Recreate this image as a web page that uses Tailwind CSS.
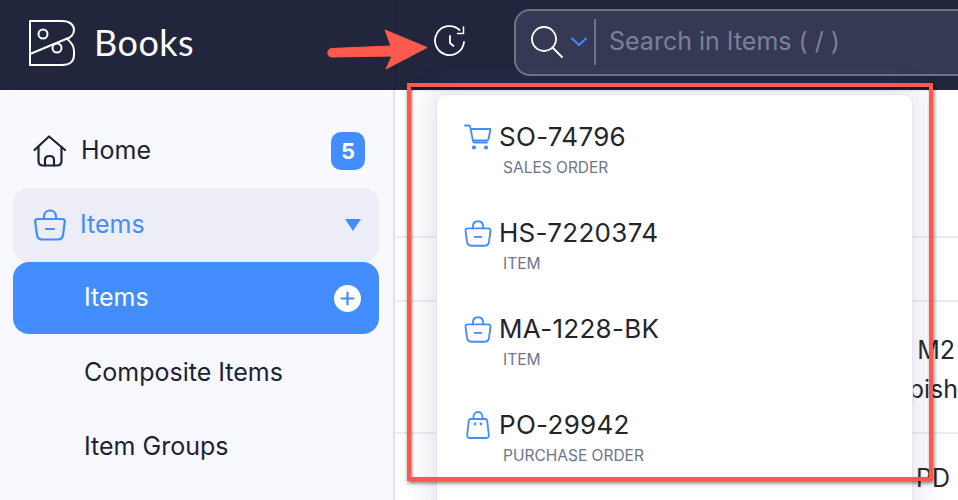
<!doctype html>
<html><head><meta charset="utf-8"><script src="https://cdn.jsdelivr.net/npm/@tailwindcss/browser@4"></script></head>
<body class="m-0 bg-white">
<div class="relative w-[958px] h-[500px] overflow-hidden bg-white font-['Inter',sans-serif]">
  <header class="flex h-[90px] bg-[#22263d]">
    <div class="flex items-center w-[395px] h-[90px] bg-[#22263d] rounded-bl-[14px] rounded-br-[14px] pl-[28px] pb-[6px] gap-[18px]">
      <svg class="w-[48px] h-[48px]" viewBox="0 0 48 48" fill="none" stroke="#fff" stroke-width="2"><path d="M2 3H34C42 3 46 7 46 12C46 16 43 20 38 21L2 36V3Z" stroke-linejoin="round"/><path d="M2 36V48H34C42 48 46 44 46 38V34C46 28 42 24 38 21" transform="translate(0 -1)"/><circle cx="15" cy="16" r="4.5"/><circle cx="29" cy="30" r="4.5"/></svg>
      <span class="text-[36px] leading-none text-white font-['Lato',sans-serif] tracking-[0.5px]">Books</span>
    </div>
    <div class="flex items-center flex-1 border-l border-[#191c2e] pl-[38px] ml-[0px] pb-[6px] gap-[46px]">
      <svg class="w-[34px] h-[34px]" viewBox="0 0 34 34" fill="none" stroke="#fff" stroke-width="1.8" stroke-linecap="round"><path d="M30 17A14.5 14.5 0 1 1 25.500 5"/><path d="M29.500 2V8.500H23.500" stroke-linejoin="round" stroke-width="1.500"/><path d="M16 11V18L19.500 21"/></svg>
      <div class="flex items-center w-[460px] h-[67px] mr-[-16px] rounded-[16px] border-2 border-[#6e7288] bg-[#353954]">
        <svg class="ml-[14px] w-[34px] h-[34px]" viewBox="0 0 34 34" fill="none" stroke="#fff" stroke-width="1.800" stroke-linecap="round"><circle cx="14" cy="14" r="12"/><path d="M23 23L32 32"/></svg>
        <svg class="ml-[7px] w-[16px] h-[10px]" viewBox="0 0 16 10" fill="none" stroke="#3f8dff" stroke-width="2" stroke-linecap="round" stroke-linejoin="round"><path d="M1 1.500L8 8L15 1.500"/></svg>
        <div class="ml-[7px] w-[2px] h-[46px] bg-[#6e7288]"></div>
        <span class="ml-[13px] text-[25px] text-[#7d8097] whitespace-nowrap">Search in Items ( / )</span>
      </div>
    </div>
  </header>
  <div class="flex h-[410px]">
    <aside class="w-[395px] h-full bg-[#f8f9ff] border-r-2 border-[#e3e3e6] pl-[13px] pr-[14px] pt-[24px] text-[#1e2235] text-[25px] shrink-0">
      <div class="flex items-center h-[74px] pl-[20px] pr-[14px] pb-[0px]">
        <svg class="w-[34px] h-[32px] mr-[14px]" viewBox="0 0 34 32" fill="none" stroke="#1e2235" stroke-width="2.200" stroke-linecap="round" stroke-linejoin="round"><path d="M1.500 15L16 1.500L32 15"/><path d="M5.500 12V26C5.500 29 7 30.500 10 30.500H24C27 30.500 28.500 29 28.500 26V12"/><path d="M12 30.500V25C12 22.500 14 21 16.500 21C19 21 21 22.500 21 25V30.500"/></svg>
        <span class="flex-1">Home</span>
        <span class="flex items-center justify-center w-[34px] h-[38px] rounded-[10px] bg-[#438dff] text-white text-[22px] font-bold">5</span>
      </div>
      <div class="flex items-center h-[74px] pl-[21px] pr-[18px] rounded-[16px] bg-[#ecedf6] text-[#438dff]">
        <svg class="w-[32px] h-[32px] mr-[14px]" viewBox="0 0 32 32" fill="none" stroke="#438dff" stroke-width="2.200" stroke-linecap="round" stroke-linejoin="round"><path d="M10 10V8C10 4 12.500 1.500 16 1.500C19.500 1.500 22 4 22 8V10"/><path d="M3.500 10H28.500C30 10 31 11 30.800 13L29 26C28.500 29 27 30.500 24 30.500H8C5 30.500 3.500 29 3 26L1.200 13C1 11 2 10 3.500 10Z"/><path d="M12 20H20"/></svg>
        <span class="flex-1">Items</span>
        <span class="w-0 h-0 border-l-[8px] border-r-[8px] border-t-[12px] border-l-transparent border-r-transparent border-t-[#438dff] mb-[1px]"></span>
      </div>
      <div class="flex items-center h-[72px] mt-0 pl-[71px] pr-[18px] rounded-[16px] bg-[#438dff] text-white">
        <span class="flex-1">Items</span>
        <span class="flex items-center justify-center w-[27px] h-[27px] rounded-full bg-white"><svg class="w-[15px] h-[15px]" viewBox="0 0 15 15" stroke="#438dff" stroke-width="2.200" stroke-linecap="round"><path d="M7.500 1.500V13.500M1.500 7.500H13.500"/></svg></span>
      </div>
      <div class="flex items-center h-[74px] pl-[71px] mt-[2px]">Composite Items</div>
      <div class="flex items-center h-[74px] pl-[71px]">Item Groups</div>
    </aside>
    <main class="flex-1 text-[#26282f] text-[25px] relative">
      <div class="h-[148px] border-b-2 border-[#ecedf4]"></div>
      <div class="h-[64px] border-b-2 border-[#ecedf4]"></div>
      <div class="h-[132px] border-b-2 border-[#ecedf4] flex flex-col items-end pt-[29px] leading-[39px] whitespace-nowrap"><span class="pr-[3px]">M2</span><span>pish</span></div>
      <div class="flex justify-end pt-[26px] pr-[8px]">PD</div>
    </main>
  </div>

  <div class="absolute left-[436px] top-[94px] w-[477px] h-[430px] rounded-[10px] bg-white border border-[#e6e6f0] shadow-[0_0_24px_8px_rgba(90,90,150,0.14)] pt-[23px] pl-[27px] text-[#22252c]">
    <div class="h-[96px]">
      <div class="flex items-center h-[38px]">
        <svg class="w-[28px] h-[26px] mr-[7px]" viewBox="0 0 28 26" fill="none" stroke="#438dff" stroke-width="1.800" stroke-linecap="round" stroke-linejoin="round"><path d="M1 1.500H4.500C5.500 1.500 6 2 6.200 3L9 17C9.200 18 10 18.500 11 18.500H23"/><path d="M7 5H26.500L24.500 15C24.300 16 23.500 16.500 22.500 16.500H9"/><circle cx="10" cy="23.500" r="1.200" fill="#438dff"/><circle cx="22" cy="23.500" r="1.200" fill="#438dff"/></svg>
        <span class="text-[26px] tracking-[0.3px] leading-none">SO-74796</span>
      </div>
      <div class="pl-[39px] text-[15.500px] leading-[20px] text-[#6f7489] mt-[2px]">SALES ORDER</div>
    </div>
    <div class="h-[96px]">
      <div class="flex items-center h-[38px]">
        <svg class="w-[28px] h-[27px] mr-[7px]" viewBox="0 0 32 32" fill="none" stroke="#438dff" stroke-width="2.200" stroke-linecap="round" stroke-linejoin="round"><path d="M10 10V8C10 4 12.500 1.500 16 1.500C19.500 1.500 22 4 22 8V10"/><path d="M3.500 10H28.500C30 10 31 11 30.800 13L29 26C28.500 29 27 30.500 24 30.500H8C5 30.500 3.500 29 3 26L1.200 13C1 11 2 10 3.500 10Z"/><path d="M12 20H20"/></svg>
        <span class="text-[26px] tracking-[0.3px] leading-none">HS-7220374</span>
      </div>
      <div class="pl-[39px] text-[15.500px] leading-[20px] text-[#6f7489] mt-[2px]">ITEM</div>
    </div>
    <div class="h-[96px]">
      <div class="flex items-center h-[38px]">
        <svg class="w-[28px] h-[27px] mr-[7px]" viewBox="0 0 32 32" fill="none" stroke="#438dff" stroke-width="2.200" stroke-linecap="round" stroke-linejoin="round"><path d="M10 10V8C10 4 12.500 1.500 16 1.500C19.500 1.500 22 4 22 8V10"/><path d="M3.500 10H28.500C30 10 31 11 30.800 13L29 26C28.500 29 27 30.500 24 30.500H8C5 30.500 3.500 29 3 26L1.200 13C1 11 2 10 3.500 10Z"/><path d="M12 20H20"/></svg>
        <span class="text-[26px] tracking-[0.3px] leading-none">MA-1228-BK</span>
      </div>
      <div class="pl-[39px] text-[15.500px] leading-[20px] text-[#6f7489] mt-[2px]">ITEM</div>
    </div>
    <div class="h-[96px]">
      <div class="flex items-center h-[38px]">
        <svg class="w-[24px] h-[28px] ml-[2px] mr-[9px]" viewBox="0 0 24 28" fill="none" stroke="#438dff" stroke-width="1.800" stroke-linecap="round" stroke-linejoin="round"><path d="M7.500 8V6C7.500 3 9.500 1 12 1C14.500 1 16.500 3 16.500 6V8"/><path d="M4.500 8H19.500C20.500 8 21 8.500 21.200 9.500L22.800 24C23 26 22 27 20.500 27H3.500C2 27 1 26 1.200 24L2.800 9.500C3 8.500 3.500 8 4.500 8Z"/><circle cx="9" cy="13" r="0.500" fill="#438dff"/><circle cx="15" cy="13" r="0.500" fill="#438dff"/></svg>
        <span class="text-[26px] tracking-[0.3px] leading-none">PO-29942</span>
      </div>
      <div class="pl-[39px] text-[15.500px] leading-[20px] text-[#6f7489] mt-[2px]">PURCHASE ORDER</div>
    </div>
  </div>

  <div class="absolute left-[407px] top-[83px] w-[526px] h-[398px] border-[4px] border-[#fd5a4d] shadow-[1px_2px_4px_rgba(0,0,0,0.55),inset_1px_2px_3px_rgba(0,0,0,0.5)]"></div>

  <svg class="absolute left-[325px] top-[26px] w-[104px] h-[46px]" viewBox="0 0 104 46" fill="#fd5a4d"><path d="M6.500 22.500L66 20L60 4L102 21.500L61 43L67 30L7 31C1.500 31 1.500 23 6.500 22.500Z" stroke="#fd5a4d" stroke-linejoin="round"/></svg>
</div>
</body></html>
